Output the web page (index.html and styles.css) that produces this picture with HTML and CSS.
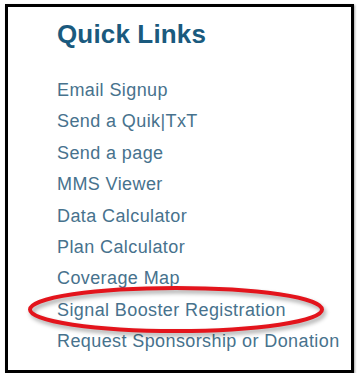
FILE: index.html
```html
<!DOCTYPE html>
<html>
<head>
<meta charset="utf-8">
<link rel="stylesheet" href="styles.css">
</head>
<body>
<div class="frame">
  <h2 class="title">Quick Links</h2>
  <ul class="links">
    <li><a href="#">Email Signup</a></li>
    <li><a href="#">Send a Quik|TxT</a></li>
    <li><a href="#">Send a page</a></li>
    <li><a href="#">MMS Viewer</a></li>
    <li><a href="#">Data Calculator</a></li>
    <li><a href="#">Plan Calculator</a></li>
    <li><a href="#">Coverage Map</a></li>
    <li><a href="#">Signal Booster Registration</a></li>
    <li><a href="#">Request Sponsorship or Donation</a></li>
  </ul>
  <svg class="circle" width="343" height="363" viewBox="0 0 343 363" xmlns="http://www.w3.org/2000/svg">
    <ellipse cx="168" cy="302.5" rx="146" ry="21.5" fill="none" stroke="#e3141c" stroke-width="4"/>
  </svg>
</div>
</body>
</html>
```
FILE: styles.css
```css
html, body {
  margin: 0;
  padding: 0;
  background: #ffffff;
}
.frame {
  position: relative;
  box-sizing: border-box;
  margin: 4px 0 0 5px;
  width: 349px;
  height: 369px;
  border: 3px solid #000;
  box-shadow: 1px 1px 2px rgba(0,0,0,0.35);
  padding: 12px 0 0 49px;
  font-family: "Liberation Sans", Arial, sans-serif;
  background: #fff;
}
.title {
  margin: 0;
  font-size: 26px;
  line-height: 30px;
  font-weight: bold;
  letter-spacing: 0.15px;
  color: #1a5a7e;
}
.links {
  list-style: none;
  margin: 26px 0 0 0;
  padding: 0;
}
.links li {
  font-size: 18px;
  line-height: 31.4px;
  letter-spacing: 0.4px;
  white-space: nowrap;
}
.links a {
  color: #47728d;
  text-decoration: none;
}
.circle {
  position: absolute;
  left: 0;
  top: 0;
  filter: drop-shadow(2px 3px 2px rgba(0,0,0,0.35));
  pointer-events: none;
}
```
